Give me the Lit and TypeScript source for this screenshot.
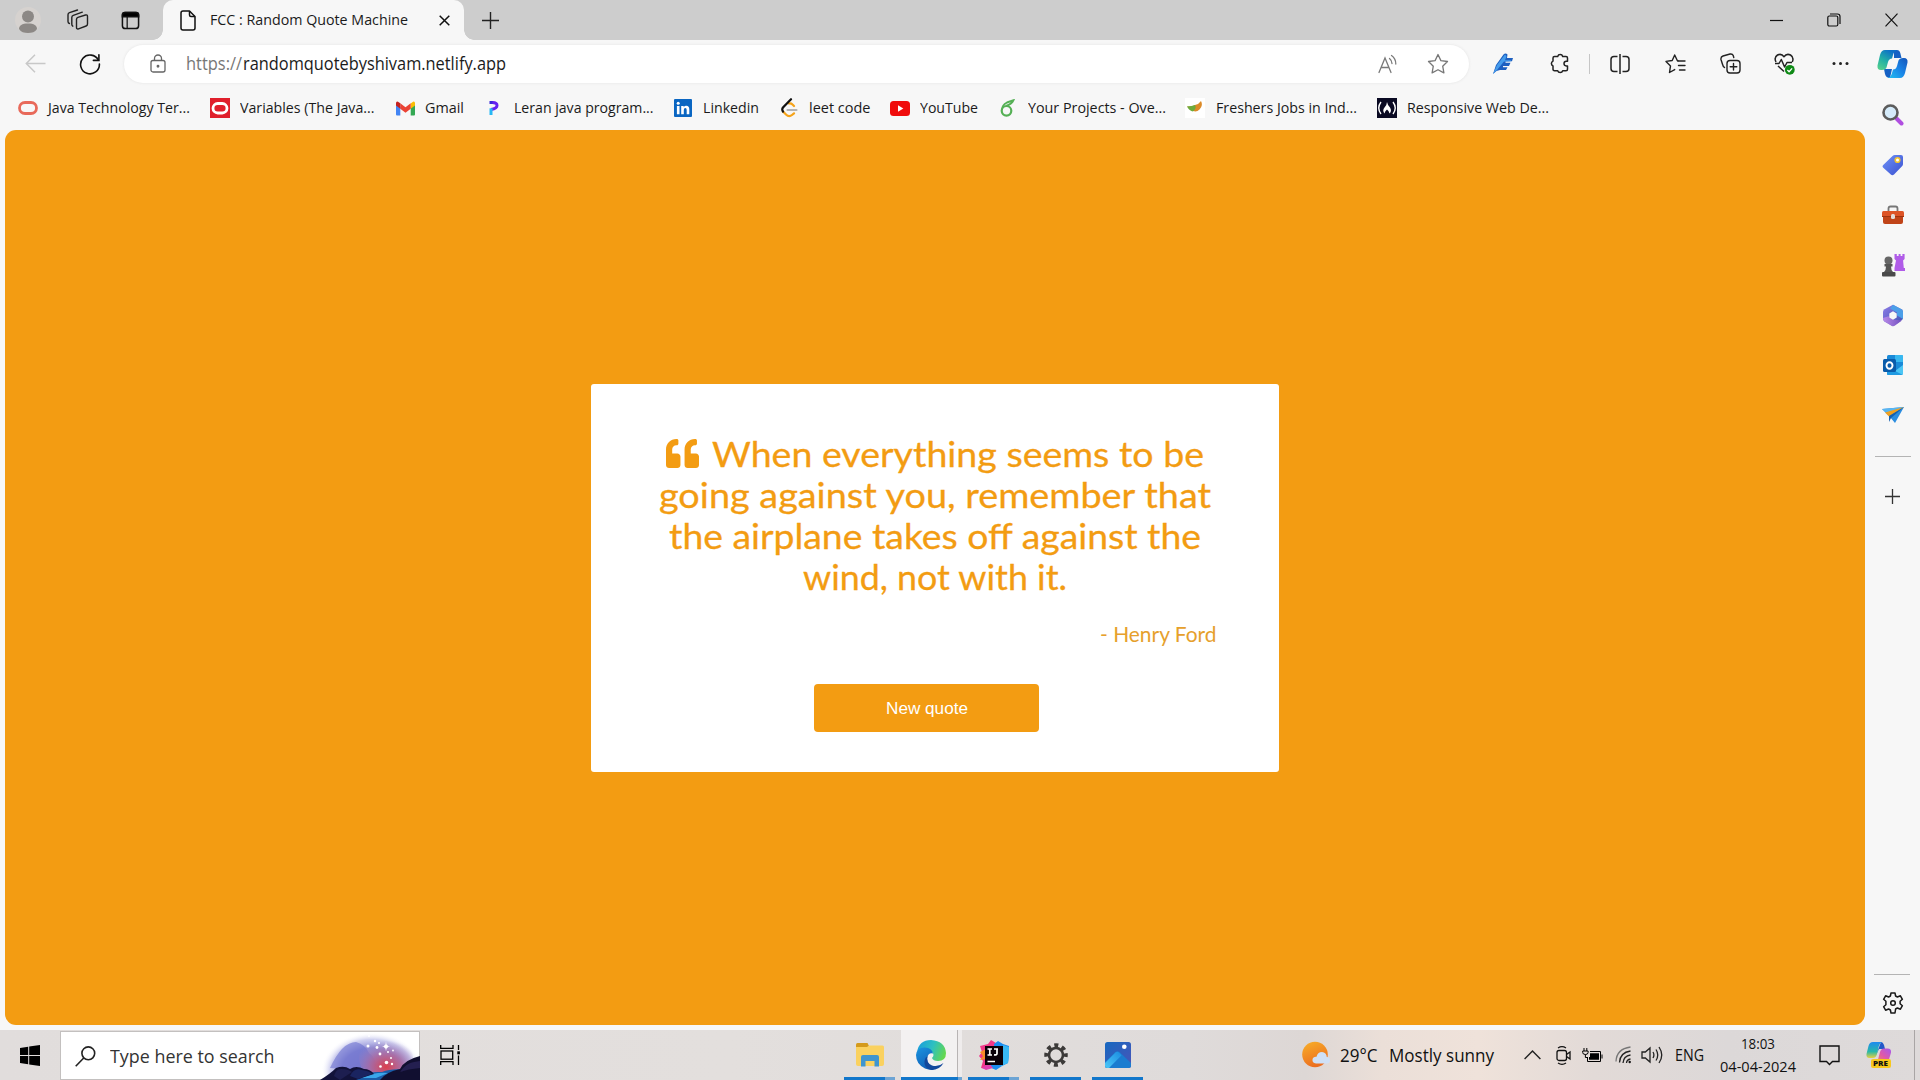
import { LitElement, html, css } from "lit";
import { customElement, property } from "lit/decorators.js";

/* One line of text, stretched or squeezed horizontally to a given width. */
@customElement("fit-text")
class FitText extends LitElement {
  @property({ type: Number }) width = 0;
  static styles = css`
    :host { display: block; white-space: nowrap; flex: none; text-align: left; }
    .t { display: inline-block; transform-origin: 0 50%; vertical-align: top; }
  `;
  firstUpdated() {
    const t = this.renderRoot.querySelector(".t") as HTMLElement;
    const natural = t.getBoundingClientRect().width;
    this.style.width = `${this.width}px`;
    if (natural > 0) t.style.transform = `scaleX(${this.width / natural})`;
  }
  render() {
    return html`<span class="t"><slot></slot></span>`;
  }
}

/* ---------- title bar ---------- */
const profile = html`<svg width="26" height="26" viewBox="0 0 26 26"><circle cx="13" cy="13" r="13" fill="#d6d2cf"/><circle cx="13" cy="9.500" r="6" fill="#8c8885"/><path d="M4 22c0-3.500 3-5.500 9-5.500s9 2 9 5.500c-2 3-5 4-9 4s-7-1-9-4z" fill="#8c8885"/></svg>`;
const workspaces = html`<svg width="22" height="22" viewBox="0 0 22 22" fill="none" stroke="#222" stroke-width="1.400" stroke-linejoin="round" stroke-linecap="round"><path d="M9.500 10.300q0-1.500 1.400-2l7.600-2.300q2-.5 2 1.500v7.500q0 1.500-1.400 2l-7.600 2.800q-2 .6-2-1.400z"/><path d="M5.800 17.200q-1-.6-1-1.900V8.500q0-1.600 1.500-2.100l9-3.200"/><path d="M2.400 14.500Q1 14 1 12.500V5.800q0-1.600 1.500-2.100L10.500 1"/></svg>`;
const verticalTabs = html`<svg width="19" height="19" viewBox="0 0 20 20" fill="none" stroke="#111" stroke-width="1.600"><rect x="1.500" y="1.500" width="17" height="17" rx="3"/><path d="M1.500 5V4Q1.500 1.500 4 1.500h12q2.500 0 2.500 2.500v2h-17z" fill="#000"/><path d="M6.500 6v12" stroke-width="1.300"/></svg>`;
const pageIcon = html`<svg width="16" height="21" viewBox="0 0 16 21" fill="none" stroke="#111" stroke-width="1.500" stroke-linejoin="round"><path d="M3 1h6.500L15 6.500V18q0 2-2 2H3q-2 0-2-2V3q0-2 2-2z"/><path d="M9.500 1v4q0 1.500 1.500 1.500h4"/></svg>`;
const closeTab = html`<svg width="11" height="11" viewBox="0 0 11 11" stroke="#111" stroke-width="1.500"><path d="M.7.7l9.600 9.600M10.300.7L.7 10.300"/></svg>`;
const plusTab = html`<svg width="17" height="17" viewBox="0 0 17 17" stroke="#222" stroke-width="1.400"><path d="M8.500 0v17M0 8.500h17"/></svg>`;
const minimize = html`<svg width="13" height="13" viewBox="0 0 13 13" stroke="#111" stroke-width="1.200"><path d="M0 6.500h13"/></svg>`;
const restore = html`<svg width="14" height="14" viewBox="0 0 14 14" fill="none" stroke="#111" stroke-width="1.200"><rect x=".8" y="3" width="10" height="10" rx="1.500"/><path d="M3 1h7.500Q13 1 13 3.500V11"/></svg>`;
const closeWin = html`<svg width="13" height="14" viewBox="0 0 13 14" stroke="#111" stroke-width="1.200"><path d="M.5.7l12 12.600M12.500.7L.5 13.300"/></svg>`;

/* ---------- toolbar ---------- */
const back = html`<svg width="21" height="19" viewBox="0 0 21 19" fill="none" stroke="#c8c8c8" stroke-width="1.500"><path d="M20.500 9.500H1.500M10 .8L1.300 9.500l8.700 8.700"/></svg>`;
const reload = html`<svg width="22" height="22" viewBox="0 0 22 22" fill="none" stroke="#111" stroke-width="1.600" stroke-linecap="round"><path d="M19.400 7.200A9.400 9.400 0 1 0 20.400 11"/><path d="M19.900 1.800v5.600h-5.500"/></svg>`;
const lock = html`<svg width="16" height="19" viewBox="0 0 16 19" fill="none" stroke="#666" stroke-width="1.300"><rect x="1" y="6.500" width="14" height="11.500" rx="2"/><path d="M4.500 6.500V4.500a3.500 3.500 0 0 1 7 0v2"/><circle cx="8" cy="12.300" r=".8" fill="#555"/></svg>`;
const readAloud = html`<svg width="20" height="20" viewBox="0 0 20 20" fill="none" stroke="#7a7a7a" stroke-width="1.300" stroke-linecap="round"><path d="M1 18.500L7 4l6 14.500M3 13.500h8"/><path d="M11.500 4.500q2.500 2 2.500 5M13.500 1.500q4.300 3 4.300 8.500"/></svg>`;
const star = html`<svg width="22" height="22" viewBox="0 0 22 22" fill="none" stroke="#777" stroke-width="1.300" stroke-linejoin="round"><path d="M11 1.500l2.900 6.100 6.600.9-4.800 4.700 1.200 6.700L11 16.700l-5.900 3.200 1.200-6.700L1.500 8.500l6.600-.9z"/></svg>`;
const feather = html`<svg width="20" height="21" viewBox="0 0 20 21"><path d="M0 21L3 12 10.500 1.500Q12.500-.5 14.500 1.500L14 5h6l-1 3.300-6.500.2v1.300h5L16 13h-6v1.200h4.500L13 17H7L3.500 18z" fill="#1d5fc0"/><path d="M0 21L4 12l8-10.500 1.500 1.700-1.500 4H18l-.4 1-6.600.3L4 17z" fill="#459cec"/></svg>`;
const puzzle = html`<svg width="20" height="21" viewBox="0 0 20 21" fill="none" stroke="#222" stroke-width="1.500" stroke-linejoin="round"><path d="M4.500 3.500h3.200a2.600 2.600 0 0 1 5 0h3.300q1.500 0 1.500 1.500v3.300h-1.200a2.300 2.300 0 0 0 0 4.600h1.200v3.300q0 1.500-1.500 1.500h-3.300a2.600 2.600 0 0 1-5 0H4.500Q3 17.700 3 16.200v-3.300a2.600 2.600 0 0 1 0-4.800V5q0-1.500 1.500-1.500z"/></svg>`;
const split = html`<svg width="20" height="20" viewBox="0 0 20 20" fill="none" stroke="#222" stroke-width="1.500"><path d="M7.500 2.500H4Q1 2.500 1 5.500v9q0 3 3 3h3.500M12.500 2.500H16q3 0 3 3v9q0 3-3 3h-3.500M10 0v20"/></svg>`;
const favorites = html`<svg width="21" height="20" viewBox="0 0 21 20" fill="none" stroke="#222" stroke-width="1.400" stroke-linejoin="round" stroke-linecap="round"><path d="M13 7h7M13.500 11.500H20M14.500 16H20"/><path d="M13 6.800h-.6L9.700 1 7.200 6.500l-6.200.9 4.500 4.500-1 6.600 5.200-2.900"/></svg>`;
const collections = html`<svg width="21" height="21" viewBox="0 0 21 21" fill="none" stroke="#222" stroke-width="1.400" stroke-linecap="round"><rect x="7" y="7.500" width="13" height="12.500" rx="3"/><path d="M13.500 10.500v6.500M10.200 13.700h6.600"/><path d="M4.500 14.500Q3 13.500 2.400 11L1 6.500Q.5 4 3 3l7-2q2.500-.4 3.200 1.500l.6 2"/></svg>`;
const health = html`<svg width="21" height="22" viewBox="0 0 21 22" fill="none" stroke="#222" stroke-width="1.500" stroke-linejoin="round"><path d="M2 9Q-.3 4.500 3.500 2q4-1.800 6.500 1.700Q12.500.2 16.500 2q3.800 2.500 1.800 7M4 13l6 5.500"/><path d="M1 10.500h4l2.300-4 3.300 7.500 2.400-4.500h5"/><circle cx="15.800" cy="16.800" r="4.900" fill="#0f8a16" stroke="none"/><path d="M13.400 17l1.700 1.700 3-3.300" stroke="#fff" stroke-width="1.300"/></svg>`;
const dots = html`<svg width="17" height="5" viewBox="0 0 17 5" fill="#222"><circle cx="2" cy="2.500" r="1.500"/><circle cx="8.500" cy="2.500" r="1.500"/><circle cx="15" cy="2.500" r="1.500"/></svg>`;

/* ---------- side bar ---------- */
const copilot = html`<svg width="31" height="28" viewBox="0 0 31 28"><defs><linearGradient id="ca" x1="0" y1="1" x2=".6" y2="0"><stop offset="0" stop-color="#5bd48a"/><stop offset=".5" stop-color="#22b0a5"/><stop offset="1" stop-color="#0c6fc8"/></linearGradient><linearGradient id="cb" x1="1" y1="0" x2="0" y2="1"><stop offset="0" stop-color="#1554b8"/><stop offset=".5" stop-color="#1a85e8"/><stop offset="1" stop-color="#22c0f0"/></linearGradient></defs><path d="M17 0h3q2.500 0 3.300 3L24.500 8H17zM7 19h8l-2 9Q9 28 8 24z" fill="#1560c4"/><path d="M8 0h12q-3 1-4 5l-1 3.500q-3 0-4 3.500L9.500 17.500Q8.500 20 5 20H4Q0 20 .5 15.500L3 5Q4.300 0 8 0z" fill="url(#ca)"/><path d="M23 28H11q3-1 4-5l1-3.500q3 0 4-3.500l1.500-5.500Q22.500 8 26 8h1q4 0 3.500 4.500L28 23q-1.300 5-5 5z" fill="url(#cb)"/></svg>`;
const sideSearch = html`<svg width="22" height="22" viewBox="0 0 22 22"><path d="M14.500 14.500l5 5" stroke="#b04fe0" stroke-width="4" stroke-linecap="round"/><circle cx="8.500" cy="8.500" r="7" fill="#d5ebfa" stroke="#5c5c5c" stroke-width="2.600"/></svg>`;
const sideTag = html`<svg width="22" height="22" viewBox="0 0 22 22"><defs><linearGradient id="tg" x1="0" y1="0" x2="1" y2="1"><stop offset="0" stop-color="#6f93f8"/><stop offset="1" stop-color="#3a50d0"/></linearGradient></defs><path d="M1.200 11L10.500 2q1-1 2.300-1H19q2 0 2 2v7q0 1.200-1 2.200L12 20.500q-1.700 1.300-3.200 0l-7.500-6.800q-1.500-1.400-.1-2.700z" fill="url(#tg)"/><circle cx="15.500" cy="6" r="2.300" fill="#fff" stroke="#f2c230" stroke-width="1.600"/></svg>`;
const sideTools = html`<svg width="24" height="20" viewBox="0 0 24 20"><path d="M7.500 6V3.500q0-2 2-2h5q2 0 2 2V6" fill="none" stroke="#777" stroke-width="1.800"/><path d="M1 7.500Q1 6 2.500 6h19Q23 6 23 7.500V12H1z" fill="#dd5426"/><path d="M2 12h20v5q0 2-2 2H4q-2 0-2-2z" fill="#c04418"/><path d="M1 11.500h22" stroke="#9e3410"/><rect x="10" y="9" width="4" height="5" rx="1.500" fill="#e4ddd8"/></svg>`;
const sideGames = html`<svg width="24" height="24" viewBox="0 0 24 24"><path d="M13.500 1h2.300v2h1.800V1h2v2h1.800V1h2.200v5l-1.500 1.500.7 7.500H24v3H13.500v-3l1.500-7.500-1.500-1.500z" fill="#b05ce8"/><circle cx="7.500" cy="7.500" r="4" fill="#666"/><path d="M3.500 11h8v2.500H10q0 3.500 2 5.500H3q2-2 2-5.500H3.500z" fill="#555"/><rect x="1" y="19" width="13.500" height="4.500" rx="1" fill="#4a4a4a"/></svg>`;
const side365 = html`<svg width="22" height="23" viewBox="0 0 22 23"><defs><linearGradient id="ma" x1="0" y1="0" x2="1" y2="1"><stop offset="0" stop-color="#8f7de8"/><stop offset="1" stop-color="#3b4fae"/></linearGradient><linearGradient id="mb" x1="0" y1="0" x2="1" y2="0"><stop offset="0" stop-color="#b98be8"/><stop offset="1" stop-color="#7250c0"/></linearGradient></defs><path d="M11 .7l8.500 4.600q1.500 1 1.500 2.700v7L11 22.300 2.500 17.500Q1 16.500 1 14.800V8q0-1.700 1.500-2.700z" fill="url(#ma)"/><path d="M11 .7l8.500 4.600q1.500 1 1.500 2.700v7l-6-3.500V8.600L8 4.500z" fill="#4c9fe8"/><path d="M1 14l5.500-1.800L11 15.500l9 1-7 5q-2 1.200-4 .1l-6.500-4Q1 16.500 1 14z" fill="url(#mb)"/><path d="M11 7.300l3.700 2.200v4L11 15.700l-3.700-2.200v-4z" fill="#f7f7f7"/></svg>`;
const sideOutlook = html`<svg width="22" height="22" viewBox="0 0 22 22"><rect x="5" y="1" width="16" height="19" rx="1.500" fill="#1a8ad8"/><path d="M13 1h7q1 0 1 1v6h-8z" fill="#38b8f0"/><path d="M5 13l8 4 8-6v8.500q0 1.500-1.500 1.500H6q-1 0-1-1z" fill="#4cc6f4"/><path d="M5 13l16 8H6q-1 0-1-1z" fill="#1f9ae2"/><rect x="1" y="5" width="13" height="13" rx="1.500" fill="#0a5cab"/><ellipse cx="7.500" cy="11.500" rx="3" ry="3.300" fill="none" stroke="#fff" stroke-width="1.900"/></svg>`;
const sideDrop = html`<svg width="22" height="18" viewBox="0 0 22 18"><path d="M0 3L22 1l-9 16-5-6z" fill="#2b8de0"/><path d="M0 3L22 1 7 9z" fill="#58b6f2"/><path d="M3 6.500L22 1 7 10.500z" fill="#f0a020"/><path d="M7 10l15-9-13 11-2 4z" fill="#1560b0"/></svg>`;
const sidePlus = html`<svg width="15" height="15" viewBox="0 0 15 15" stroke="#333" stroke-width="1.300"><path d="M7.500 0v15M0 7.500h15"/></svg>`;
const sideGear = html`<svg width="22" height="22" viewBox="0 0 22 22" fill="none" stroke="#1a1a1a" stroke-width="1.500" stroke-linejoin="round"><path d="M9 1h4l.6 3 1.800 1 3-1.200 2 3.500-2.300 2v2.400l2.300 2-2 3.500-3-1.200-1.800 1L13 21H9l-.6-3-1.800-1-3 1.200-2-3.500 2.300-2V9.300l-2.300-2 2-3.500 3 1.200 1.800-1z"/><circle cx="11" cy="11" r="2.300"/></svg>`;

/* ---------- bookmarks ---------- */
const bmOracle = html`<svg width="20" height="20" viewBox="0 0 20 20"><rect x="1.500" y="4.500" width="17" height="11" rx="5.500" fill="none" stroke="#e8695a" stroke-width="2.800"/></svg>`;
const bmOracleRed = html`<svg width="20" height="20" viewBox="0 0 20 20"><rect width="20" height="20" fill="#e01f2b"/><rect x="3" y="5.500" width="14" height="9.500" rx="4.700" fill="none" stroke="#fff" stroke-width="2.800"/></svg>`;
const bmGmail = html`<svg width="19" height="15" viewBox="0 0 19 15"><path d="M0 3v10.500q0 1 1 1h3.300V6z" fill="#4285f4"/><path d="M19 3v10.500q0 1-1 1h-3.300V6z" fill="#34a853"/><path d="M14.700 2.500L17 .7q2-.7 2 1.600v2.200l-4.300 3.300z" fill="#fbbc04"/><path d="M4.300 2.300L9.500 6.300l5.200-4v5.500l-5.200 4-5.200-4z" fill="#ea4335"/><path d="M0 4.500V2.300Q0 0 2 .7l2.300 1.600v5.500z" fill="#c5221f"/></svg>`;
const bmP = html`<svg width="14" height="16" viewBox="0 0 14 16" fill="none" stroke-width="3"><path d="M3.500 2.500h3.800" stroke="#3a2ad8"/><path d="M6.500 2.500q4.500 0 4.500 3T5 9.500" stroke="#6420f0"/><path d="M5 8.300V15" stroke="#28b8f4"/></svg>`;
const bmLinkedin = html`<svg width="18" height="18" viewBox="0 0 18 18"><rect width="18" height="18" rx="1" fill="#0a66c2"/><circle cx="4.200" cy="4.300" r="1.500" fill="#fff"/><path d="M2.900 7h2.600v8.300H2.900zM7.200 7h2.500v1.200Q10.500 6.800 12.300 6.800q3 0 3 3.600v4.900h-2.600v-4.400q0-1.900-1.400-1.900-1.500 0-1.500 1.900v4.400H7.200z" fill="#fff"/></svg>`;
const bmLeet = html`<svg width="17" height="20" viewBox="0 0 17 20" fill="none" stroke-width="2.200" stroke-linecap="round"><path d="M6.500 12h9" stroke="#b3b3b3"/><path d="M8 5.500q2-.5 3.500 1L13 8M2 13.500l3 3q3 3 6 .5l2-1.700" stroke="#f5a31a"/><path d="M10 1.200L2 9.500q-1.500 2 0 4" stroke="#111"/></svg>`;
const bmYoutube = html`<svg width="20" height="15" viewBox="0 0 20 15"><rect width="20" height="15" rx="3.500" fill="#f00c0c"/><path d="M8 4.300l5.300 3.200L8 10.700z" fill="#fff"/></svg>`;
const bmOverleaf = html`<svg width="15" height="18" viewBox="0 0 15 18" fill="none" stroke="#55b055" stroke-width="2.200"><circle cx="6.500" cy="11.800" r="4.800"/><path d="M2 11Q2 6 7 3.500L13.500 1.200Q12 5 6 7" stroke-width="1.900"/></svg>`;
const bmFreshers = html`<svg width="20" height="20" viewBox="0 0 20 20"><rect width="20" height="20" fill="#fff"/><path d="M2 8.500q5 .5 8-1.500 4-1 6-4 2.500 4.500-1.500 8.500-5 5-12.500-3z" fill="#dc8a28"/><path d="M2 8.500q5-.3 8-1.500 2 3-2 6.500-3.500-.5-6-5z" fill="#6dab3c"/></svg>`;
const bmFcc = html`<svg width="20" height="20" viewBox="0 0 20 20"><rect width="20" height="20" fill="#0a0a23"/><path d="M4 4Q-.5 10 4 16M16 4q4.500 6 0 12" fill="none" stroke="#fff" stroke-width="1.400"/><path d="M10 4q0 2.500-2.500 5.500t0 6q.5-2.500 2.500-4 2 1.500 2.500 4 2.700-2.500.5-6Q10.500 7 10 4z" fill="#fff"/></svg>`;

/* ---------- page ---------- */
const quoteMark = html`<svg width="33" height="29" viewBox="0 0 512 448" preserveAspectRatio="none"><path fill="#f39c12" d="M464 224h-80v-64c0-35.300 28.700-64 64-64h8c13.300 0 24-10.700 24-24V24c0-13.300-10.700-24-24-24h-8c-88.400 0-160 71.600-160 160v240c0 26.500 21.500 48 48 48h128c26.500 0 48-21.500 48-48V272c0-26.500-21.500-48-48-48zm-288 0H96v-64c0-35.300 28.700-64 64-64h8c13.300 0 24-10.700 24-24V24c0-13.300-10.700-24-24-24h-8C71.600 0 0 71.600 0 160v240c0 26.500 21.500 48 48 48h128c26.500 0 48-21.500 48-48V272c0-26.500-21.500-48-48-48z"/></svg>`;

/* ---------- task bar ---------- */
const winLogo = html`<svg width="20" height="21" viewBox="0 0 20 21"><path d="M0 3l8.200-1.200v8.200H0zM9.200 1.600L20 0v10H9.200zM0 11h8.200v8.200L0 18zM9.200 11H20v10L9.200 19.400z" fill="#000"/></svg>`;
const lens = html`<svg width="21" height="21" viewBox="0 0 21 21" fill="none" stroke="#222" stroke-width="1.600"><circle cx="13.300" cy="7.300" r="6.400"/><path d="M8.700 12L.7 20.300"/></svg>`;
const scene = html`<svg width="100" height="48" viewBox="0 0 100 48"><defs>
<radialGradient id="sg" cx=".5" cy=".62" r=".5"><stop offset="0" stop-color="#7f78c8"/><stop offset=".6" stop-color="#8f8fd6"/><stop offset=".82" stop-color="#c3c4ec" stop-opacity=".8"/><stop offset="1" stop-color="#fff" stop-opacity="0"/></radialGradient>
<radialGradient id="sr" cx=".5" cy=".7" r=".6"><stop offset="0" stop-color="#dc3f4c"/><stop offset=".5" stop-color="#b0689c" stop-opacity=".8"/><stop offset="1" stop-color="#9b86c8" stop-opacity="0"/></radialGradient></defs>
<ellipse cx="52" cy="30" rx="51" ry="39" fill="url(#sg)"/><path d="M10 36Q22 10 36 10q10 3 13 11 8 5 7 18z" fill="#6b70cf" opacity=".6"/><ellipse cx="66" cy="26" rx="27" ry="22" fill="url(#sr)"/>
<path d="M26 48q14-9 36-8 10-4 26-2v10z" fill="#1b5ca8"/><path d="M40 46q14-6 28-5l-12 5z" fill="#3aa6ea"/>
<path d="M0 48q10-6 16-12 8-3 14 1 6-4 14 0 6 0 10 5-10 3-18 6z" fill="#12123a"/><path d="M14 44q2-8 8-7 6 0 10 3l-12 8z" fill="#1d1e50"/><path d="M30 44q4-9 12-6 8 1 10 4l-14 5z" fill="#1a2460"/>
<path d="M100 24v24H60q6-8 20-11 4-9 20-13z" fill="#110f30"/><path d="M80 40q6-9 14-10l6-1v7q-12 1-20 4z" fill="#241f50"/>
<g fill="#fff"><circle cx="49" cy="4" r=".9"/><circle cx="55" cy="9" r="1.200"/><circle cx="48" cy="14" r="1.500"/><circle cx="59" cy="11" r="1"/><circle cx="57" cy="15.500" r="1.400"/><circle cx="66" cy="14.500" r="2"/><circle cx="60" cy="22" r="1.400"/><circle cx="68" cy="20" r="1"/><circle cx="73" cy="18.500" r=".9"/><circle cx="71" cy="26" r="1"/><circle cx="66.500" cy="30.500" r="1.800"/><circle cx="72" cy="32" r="1.200"/><circle cx="60.500" cy="34.500" r="1.300"/><path d="M66 9.500l.7 4.300 3.300.7-3.300.7-.7 4.300-.7-4.300-3.300-.7 3.300-.7z"/></g></svg>`;
const taskView = html`<svg width="21" height="20" viewBox="0 0 21 20" fill="none" stroke="#000" stroke-width="1.300"><path d="M.7 0v3.300h12.300V0M.7 20v-3.300h12.300V20"/><rect x="1" y="6" width="11.700" height="8.200"/><path d="M18.500 0v5M18.500 10.500V20"/><rect x="17.300" y="6.300" width="2.600" height="3" fill="#000" stroke="none"/></svg>`;
const explorer = html`<svg width="28" height="24" viewBox="0 0 28 24"><path d="M0 1.500Q0 0 1.500 0h10l2 4H0z" fill="#d49a1c"/><path d="M0 4h11l2-1.500h13.500Q28 2.500 28 4v17q0 2-2 2H2q-2 0-2-2z" fill="#fad15f"/><path d="M5 23.500V14q0-2 2-2h14q2 0 2 2v9.500h-4.500V18h-9v5.500z" fill="#3f95cf"/></svg>`;
const edge = html`<svg width="30" height="30" viewBox="0 0 30 30"><defs><linearGradient id="ea" x1="0" y1=".3" x2="1" y2=".6"><stop offset="0" stop-color="#1a9fdc"/><stop offset=".5" stop-color="#2ec0c0"/><stop offset="1" stop-color="#66d84c"/></linearGradient><linearGradient id="eb" x1="0" y1="0" x2=".5" y2="1"><stop offset="0" stop-color="#1b94e0"/><stop offset="1" stop-color="#1060b8"/></linearGradient></defs><path d="M1 12Q3 0 15 0q14 1 15 13 0 8-8 8-5 0-6-3 3-3 0-6Q10 6 1 12z" fill="url(#ea)"/><path d="M0 15Q1 7 9 7.500q7 .5 8 6-5-1-6 5 0 7 7 11.200Q14 30.500 9 28.500 0 24 0 15z" fill="url(#eb)"/><path d="M11.500 16q-1.500 7 4.500 9.500 6 2 11.500-2.500-4 7-12 7-8-2-7-9 .5-3.500 3-5z" fill="#12489c"/></svg>`;
const intellij = html`<svg width="30" height="30" viewBox="0 0 30 30"><path d="M1 6l8-2 3-4 5 3 4 6-6 18-7 2-6-1 2-7-4-5 3-4z" fill="#f0388a"/><path d="M1 12l6-3v10l-6 1 3-4z" fill="#f88a28"/><path d="M15 4l4-3 5 3 6 2v8l-1 9-6 3-6 4-7-3 6-6z" fill="#1a8cf0"/><path d="M24 5l6 2v8l-1 8-7 3z" fill="#38b8f4"/><path d="M3 28l7-5 4 5-7 2z" fill="#e040b0"/><rect x="6" y="6" width="18" height="19" fill="#0a0008"/><path d="M8.500 9h4.500M8.500 15h4.500M10.800 9v6M15 9h4M18 9v4.500q0 1.800-3 1.300M8.500 21.500h7.500" stroke="#fff" stroke-width="1.700" fill="none"/></svg>`;
const settings = html`<svg width="24" height="24" viewBox="0 0 24 24"><circle cx="12" cy="12" r="9.500" fill="none" stroke="#3c3a39" stroke-width="4.500" stroke-dasharray="3.900 3.560" stroke-dashoffset="1.950"/><circle cx="12" cy="12" r="7" fill="none" stroke="#3c3a39" stroke-width="2.600"/></svg>`;
const photos = html`<svg width="26" height="26" viewBox="0 0 26 26"><defs><linearGradient id="pa" x1="0" y1="0" x2="1" y2="1"><stop offset="0" stop-color="#1668c0"/><stop offset="1" stop-color="#4a54b8"/></linearGradient><linearGradient id="pb" x1="0" y1="1" x2="1" y2="0"><stop offset="0" stop-color="#4cc8f8"/><stop offset="1" stop-color="#1a8ce0"/></linearGradient></defs><rect width="26" height="26" rx="2.500" fill="url(#pa)"/><path d="M0 20L10.500 10q2-1.500 4 0L26 21v2.500q0 2.500-2.500 2.500h-21Q0 26 0 23.500z" fill="#1a7cd0"/><path d="M0 21L10.500 10.500q2-1.500 3.800.3l2.300 2.400L4 26H2.500Q0 26 0 23.500z" fill="url(#pb)"/><circle cx="19.300" cy="4.700" r="2.300" fill="#fff"/></svg>`;
const weather = html`<svg width="29" height="28" viewBox="0 0 29 28"><defs><linearGradient id="wa" x1="0" y1="0" x2=".4" y2="1"><stop offset="0" stop-color="#f8b028"/><stop offset="1" stop-color="#ec6f20"/></linearGradient></defs><circle cx="13" cy="13.500" r="12.800" fill="url(#wa)"/><path d="M14 22.500q-4-.5-3.500-4 .5-3 4-2.700Q15.500 11 20 11q4.500.5 4.800 5 3.200.2 3.200 3.300 0 3.200-3.500 3.200z" fill="#cfe0f6"/></svg>`;
const chevron = html`<svg width="17" height="10" viewBox="0 0 17 10" fill="none" stroke="#222" stroke-width="1.400"><path d="M.6 9L8.500 1l7.900 8"/></svg>`;
const meet = html`<svg width="15" height="19" viewBox="0 0 15 19" fill="none" stroke="#111" stroke-width="1.300"><rect x="1" y="4.500" width="9.500" height="10" rx="2"/><path d="M10.500 8.500L14 6v7l-3.500-2.500M2 2q4-2.600 8 0M2 17q4 2.600 8 0"/></svg>`;
const battery = html`<svg width="21" height="15" viewBox="0 0 21 15" fill="none" stroke="#000" stroke-width="1"><path d="M8 3.500h10.500v10h-13V9"/><path d="M8 5.200h9v6.600H7V9h1z" fill="#000" stroke="none"/><path d="M20 6.500v4M2 0v3M4.800 0v3M.7 3h5.400v1.500q0 2-2.700 2t-2.700-2zM3.400 6.500v3H5.500"/></svg>`;
const wifi = html`<svg width="17" height="18" viewBox="0 0 17 18" fill="none" stroke="#222" stroke-width="1.300"><path d="M1 15.500Q1.500 3 15.500 1" stroke="#777"/><path d="M4.500 16.500Q5 6.500 15.500 5M8 17q.5-7 7.500-8M11.500 17q.3-3.500 4-4"/><circle cx="14.700" cy="16" r="1.200" fill="#111" stroke="none"/></svg>`;
const speaker = html`<svg width="22" height="18" viewBox="0 0 22 18" fill="none" stroke="#222" stroke-width="1.300"><path d="M1 6h3.300L9 2v14l-4.700-4H1zM12 6q1.800 3 0 6M15 3.500q3.500 5.500 0 11M18 1q5.500 8 0 16"/></svg>`;
const notice = html`<svg width="21" height="21" viewBox="0 0 21 21" fill="none" stroke="#111" stroke-width="1.400"><path d="M1 1h19v15.500h-6.500L10.500 19.500l-3-3H1z"/></svg>`;
const copilotPre = html`<svg width="26" height="26" viewBox="0 0 26 26"><defs><linearGradient id="qa" x1="0" y1="0" x2="0" y2="1"><stop offset="0" stop-color="#1f8af0"/><stop offset=".6" stop-color="#28b8a8"/><stop offset="1" stop-color="#e8d040"/></linearGradient><linearGradient id="qb" x1="1" y1="0" x2="0" y2="1"><stop offset="0" stop-color="#a458f0"/><stop offset=".5" stop-color="#e058a8"/><stop offset="1" stop-color="#f89050"/></linearGradient></defs><path d="M15 1q2 0 3 3l1 4h-6l-3 6z" fill="#2358c8"/><path d="M7 1h9q-2.500 1-3.300 4.500L11 13q-1 4-4 4H3.500Q0 17 .5 13L2.500 5Q3.500 1 7 1z" fill="url(#qa)"/><path d="M18 22H9q2.500-1 3.300-4.500L14 11q1-3.500 4-3.500h3.500q4 0 3.500 4l-2 7q-1 3.500-5 3.500z" fill="url(#qb)"/></svg>`;

@customElement("app-root")
class AppRoot extends LitElement {
  static styles = css`
    :host { display: block; width: 1920px; height: 1080px; overflow: hidden; background: #f7f7f7;
      font-family: "Open Sans", "Noto Sans", sans-serif; color: #1b1b1b; }
    * { box-sizing: border-box; }
    svg { display: block; flex: none; }
    .screen { display: flex; flex-direction: column; height: 1080px; }
    .titlebar { display: grid; grid-template-columns: 14.500px 52.500px 53.500px 42.500px 301px 18px 1288px 57px 58px 1fr;
      align-items: center; height: 40px; background: #cdcdcd; flex: none; }
    .tab { display: grid; grid-template-columns: 17px 30px 229px 1fr; align-items: center; align-self: stretch; position: relative;
      background: #f7f7f7; border-radius: 10px 10px 0 0; font-size: 14.600px; line-height: 20px; }
    .tab fit-text { margin-bottom: 2px; }
    .tab::before, .tab::after { content: ""; position: absolute; bottom: 0; width: 10px; height: 10px; }
    .tab::before { left: -10px; background: radial-gradient(circle at 0 0, transparent 9.500px, #f7f7f7 10px); }
    .tab::after { right: -10px; background: radial-gradient(circle at 100% 0, transparent 9.500px, #f7f7f7 10px); }
    .body { display: grid; grid-template-columns: 1865px 55px; height: 990px; flex: none; }
    .main { display: flex; flex-direction: column; padding: 0 0 5px 5px; }
    .toolbar { display: grid; grid-template-columns: 20px 54px 45px 1345px 24px 57px 39px 21px 55px 55px 54px 58px 1fr;
      align-items: center; height: 47px; flex: none; margin-right: -50px; }
    .toolbar > svg:first-child { grid-column: 2; margin-left: 0; }
    .address { display: grid; grid-template-columns: 26px 36px 57px 1135px 48.500px 1fr; align-items: center; height: 38px;
      background: #fff; border-radius: 19px; box-shadow: 0 0 3px #e2e2e2; font-size: 17.400px; line-height: 24px; }
    .address fit-text { margin-bottom: 1px; }
    .scheme { color: #777; }
    .divider { width: 1px; height: 20px; background: #c6c6c6; }
    .bookmarks { display: grid; height: 43px; flex: none; align-items: center; font-size: 14.600px; line-height: 20px; padding: 0 0 1px 13px;
      grid-template-columns: 29.500px 162.500px 30.300px 155.700px 29px 61px 28px 160px 29px 78px 28px 81px 30.500px 79.500px 28px 157px 31px 161px 30px 1fr; }
    .bookmarks fit-text { margin-bottom: 2px; }
    .page { flex: 1; background: #f39c12; border-radius: 11px; display: flex; justify-content: center; align-items: flex-start; padding-top: 254px; }
    .card { width: 688px; height: 388px; background: #fff; border-radius: 3px; padding-top: 49px; display: flex; flex-direction: column;
      align-items: center; font-family: Lato, "Open Sans", sans-serif; color: #f39c12; }
    .line { display: flex; align-items: center; gap: 13.500px; height: 41px; font-size: 34.500px; line-height: 41px; font-weight: 400;
      -webkit-text-stroke: 0.300px #f39c12; }
    .line svg { margin-top: -1px; }
    .author { align-self: flex-end; margin: 25px 62.500px 0 0; font-size: 20.500px; line-height: 24px; height: 24px; color: #e6a02c; }
    .btn { align-self: flex-start; margin: 38px 0 0 223px; width: 225px; height: 48px; border: 0; border-radius: 4px; background: #f39c12; color: #fff;
      display: flex; align-items: center; justify-content: center; font: 16px/20px "Liberation Sans", Arial, sans-serif; padding: 1px 0 0; }
    .side { display: flex; flex-direction: column; }
    .slot { height: 50px; display: flex; align-items: center; justify-content: center; flex: none; }
    .slot:first-child { padding-bottom: 2px; }
    .rule { width: 36px; height: 1px; background: #b4b4b4; margin: 16px 0 14px 10px; flex: none; }
    .bottom { margin-top: auto; }
    .bottom .rule { margin: 0 0 0 9px; }
    .bottom .slot { height: 55px; padding: 0; }
    .taskbar { display: grid; grid-template-columns: 20px 40px 360px 20px 404px 299px 1fr 618px; height: 50px; flex: none;
      align-items: center; background: linear-gradient(90deg, #e1dddc 0, #e3dfdd 38%, #dfdbda 62%, #ddd7d5 68%, #ebdfd8 72%, #efe2da 77%, #e2dad7 83%, #dcd8d8 90%, #dedada 100%); }
    .start { grid-column: 2; }
    .search { height: 49px; align-self: end; background: #fff; border: 1px solid #c3c0bf; display: grid; grid-template-columns: 14px 35px 210px 1fr; align-items: center;
      font-size: 18.400px; line-height: 26px; color: #333; }
    .search fit-text { margin-bottom: 1px; }
    .search svg:last-child { align-self: end; justify-self: end; }
    .tv { grid-column: 5; margin-left: 0; }
    .search + .tv { margin-left: 0; }
    .apps { grid-column: 6; display: flex; align-self: stretch; gap: 6px; }
    .app { width: 51px; flex: none; display: grid; grid-template-rows: 1fr 3px; justify-items: center; align-items: center; }
    .app > svg { margin-top: 3px; }
    .bar { display: flex; width: 100%; height: 3px; background: #1277cb; justify-content: flex-end; }
    .bar.multi::after { content: ""; width: 10px; background: #6da4d4; }
    .app.edge { width: 61px; background: linear-gradient(90deg, #f3f1f1 56px, #b8b4b4 56px, #b8b4b4 57px, #efecec 57px); }
    .app.edge svg { margin-right: 1px; }
    .app.edge .bar.multi::after { width: 4px; }
    .wide { margin-left: 5px; }
    .tray { grid-column: 8; display: grid; align-items: center; align-self: stretch; color: #111; font-size: 18.400px; line-height: 26px;
      grid-template-columns: 38px 48.500px 135.500px 32px 26px 33px 26px 34px 45px 99px 47px 48px 1fr; }
    .tray > fit-text { margin-bottom: 1px; }
    .eng { font-size: 15.500px; }
    .clock { font-size: 14.800px; line-height: 22.400px; display: flex; flex-direction: column; align-items: center; width: 76px; padding-bottom: 1px; }
    .pre { display: grid; width: 26px; height: 27px; margin-bottom: 1px; }
    .pre > * { grid-area: 1 / 1; }
    .badge { align-self: end; justify-self: end; width: 20px; height: 9px; margin-right: 1px; background: #f8c81c; border-radius: 2px; font-size: 7.500px; line-height: 9px; font-weight: 800; padding-left: 2px; }
    .peek { width: 1px; height: 50px; background: #a9a5a5; }
  `;

  render() {
    return html`
      <div class="screen">
        <div class="titlebar">
          <span></span>${profile}${workspaces}${verticalTabs}
          <div class="tab"><span></span>${pageIcon}<fit-text width="198">FCC : Random Quote Machine</fit-text>${closeTab}</div>
          <span></span>${plusTab}${minimize}${restore}${closeWin}
        </div>
        <div class="body">
          <div class="main">
            <div class="toolbar">
              ${back}${reload}
              <div class="address">
                <span></span>${lock}<fit-text class="scheme" width="56">https://</fit-text><fit-text width="263">randomquotebyshivam.netlify.app</fit-text>${readAloud}${star}
              </div>
              <span></span>${feather}${puzzle}<div class="divider"></div>${split}${favorites}${collections}${health}${dots}
            </div>
            <div class="bookmarks">
              ${bmOracle}<fit-text width="142">Java Technology Ter...</fit-text>
              ${bmOracleRed}<fit-text width="134.500">Variables (The Java...</fit-text>
              ${bmGmail}<fit-text width="39">Gmail</fit-text>
              ${bmP}<fit-text width="139.500">Leran java program...</fit-text>
              ${bmLinkedin}<fit-text width="56">Linkedin</fit-text>
              ${bmLeet}<fit-text width="61.500">leet code</fit-text>
              ${bmYoutube}<fit-text width="58">YouTube</fit-text>
              ${bmOverleaf}<fit-text width="138">Your Projects - Ove...</fit-text>
              ${bmFreshers}<fit-text width="141">Freshers Jobs in Ind...</fit-text>
              ${bmFcc}<fit-text width="142">Responsive Web De...</fit-text>
            </div>
            <div class="page">
              <div class="card">
                <div class="line">${quoteMark}<fit-text width="492">When everything seems to be</fit-text></div>
                <div class="line"><fit-text width="552">going against you, remember that</fit-text></div>
                <div class="line"><fit-text width="532">the airplane takes off against the</fit-text></div>
                <div class="line"><fit-text width="264">wind, not with it.</fit-text></div>
                <div class="author"><fit-text width="116.500">- Henry Ford</fit-text></div>
                <button class="btn"><fit-text width="82">New quote</fit-text></button>
              </div>
            </div>
          </div>
          <div class="side">
            ${[copilot, sideSearch, sideTag, sideTools, sideGames, side365, sideOutlook, sideDrop].map((i) => html`<div class="slot">${i}</div>`)}
            <div class="rule"></div>
            <div class="slot">${sidePlus}</div>
            <div class="bottom"><div class="rule"></div><div class="slot">${sideGear}</div></div>
          </div>
        </div>
        <div class="taskbar">
          <div class="start">${winLogo}</div>
          <div class="search"><span></span>${lens}<fit-text width="164.500">Type here to search</fit-text>${scene}</div>
          <div class="tv">${taskView}</div>
          <div class="apps">
            <div class="app">${explorer}<div class="bar multi"></div></div>
            <div class="app edge">${edge}<div class="bar multi"></div></div>
            <div class="app">${intellij}<div class="bar multi"></div></div>
            <div class="app wide">${settings}<div class="bar"></div></div>
            <div class="app wide">${photos}<div class="bar"></div></div>
          </div>
          <div class="tray">
            ${weather}<fit-text width="37.500">29°C</fit-text><fit-text width="105">Mostly sunny</fit-text>
            ${chevron}${meet}${battery}${wifi}${speaker}
            <fit-text class="eng" width="29">ENG</fit-text>
            <div class="clock"><fit-text width="34">18:03</fit-text><fit-text width="76">04-04-2024</fit-text></div>
            ${notice}
            <div class="pre">${copilotPre}<div class="badge"><fit-text width="15">PRE</fit-text></div></div>
            <div class="peek"></div>
          </div>
        </div>
      </div>
    `;
  }
}
